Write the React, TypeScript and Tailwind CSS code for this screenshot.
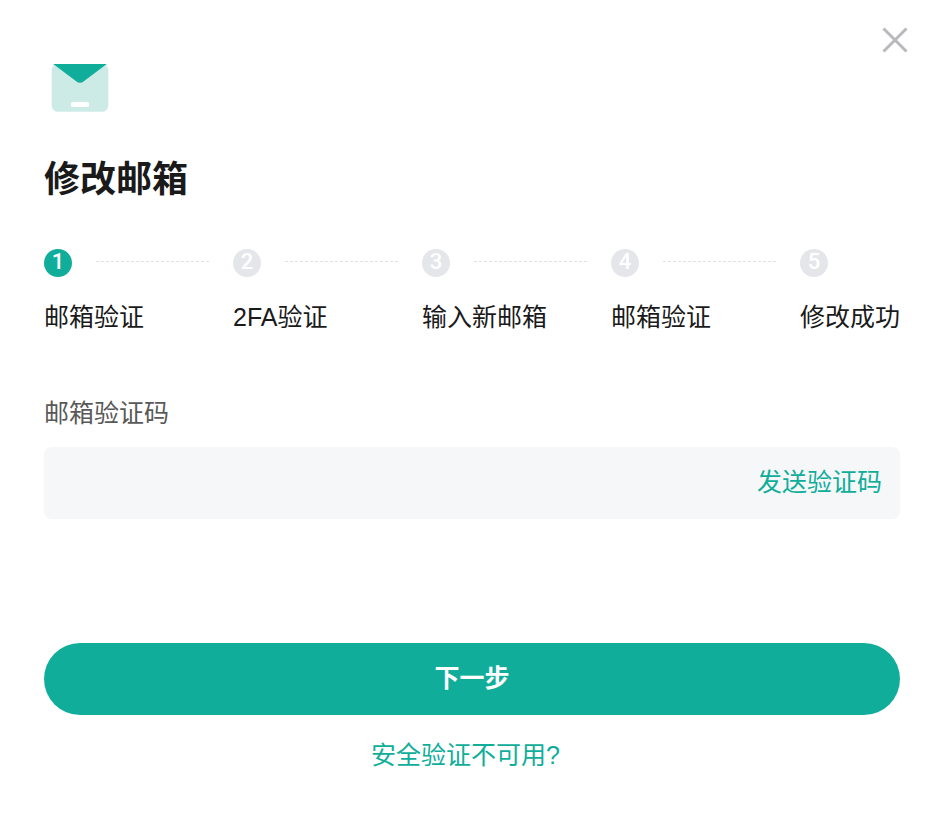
const FONT = "font-['Liberation_Sans','Noto_Sans_CJK_SC',sans-serif]";

const steps = ["邮箱验证", "2FA验证", "输入新邮箱", "邮箱验证", "修改成功"];

function MailIcon() {
  return (
    <svg width="58" height="48" viewBox="0 0 58 48" fill="none">
      <rect x="0.7" y="0" width="56.6" height="47.7" rx="6" fill="#cdebe6" />
      <path d="M2.2 0H55.8L32.5 17.5Q29 20 25.5 17.5Z" fill="#10ae9a" />
      <rect x="20" y="38" width="18" height="5" rx="1.5" fill="#fff" />
    </svg>
  );
}

export default function App() {
  return (
    <div className={`${FONT} relative w-[948px] h-[820px] bg-white pl-[44px] pr-[48px] pt-[64px]`}>
      <button className="absolute top-[27px] right-[40px] w-[26px] h-[26px]" aria-label="关闭">
        <svg width="26" height="26" viewBox="0 0 26 26" fill="none">
          <path d="M1.5 1.5L24.5 24.5M24.5 1.5L1.5 24.5" stroke="#b7b9bc" strokeWidth="3" />
        </svg>
      </button>

      <div className="ml-[7px] h-[48px]">
        <MailIcon />
      </div>

      <h1 className="mt-[41px] text-[36px] leading-[54px] font-bold text-[#1a1a1a]">修改邮箱</h1>

      <div className="mt-[42px] flex">
        {steps.map((label, i) => {
          const last = i === steps.length - 1;
          return (
            <div key={i} className={last ? "w-[100px] shrink-0" : "w-[189px] shrink-0"}>
              <div className="flex h-[28px]">
                <div
                  className={`w-[28px] h-[28px] rounded-full shrink-0 flex items-center justify-center pb-[3px] text-white text-[22px] font-medium font-['Roboto',sans-serif] ${
                    i === 0 ? "bg-[#10ae9a]" : "bg-[#e5e6ea]"
                  }`}
                >
                  {i + 1}
                </div>
                {!last && (
                  <div className="ml-[24px] w-[113px] h-[1px] mt-[12px] border-t border-dashed border-[#dfe1e4]" />
                )}
              </div>
              <div className="mt-[21px] text-[25px] leading-[38px] text-[#1a1a1a] whitespace-nowrap">{label}</div>
            </div>
          );
        })}
      </div>

      <div className="mt-[58px] text-[25px] leading-[38px] text-[#595959]">邮箱验证码</div>

      <div className="mt-[15px] h-[72px] rounded-[8px] bg-[#f6f7f9] flex items-center justify-end pr-[18px] pb-[3px]">
        <span className="text-[25px] leading-[38px] text-[#10ae9a]">发送验证码</span>
      </div>

      <button className="mt-[124px] block w-full h-[72px] rounded-full bg-[#10ae9a] text-white text-[25px] font-bold">
        下一步
      </button>

      <div className="mt-[21px] pr-[13px] text-center text-[25px] leading-[38px] text-[#10ae9a]">安全验证不可用?</div>
    </div>
  );
}
